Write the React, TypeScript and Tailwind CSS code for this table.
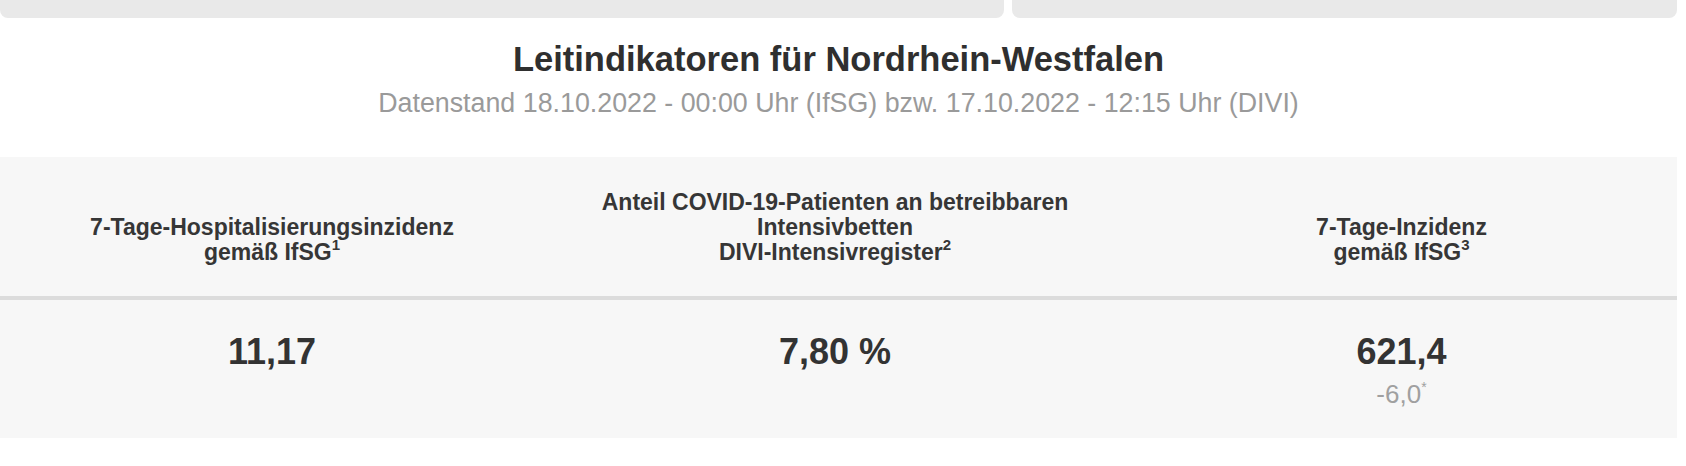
const headers = [
  { lines: ["7-Tage-Hospitalisierungsinzidenz", "gemäß IfSG"], note: "1" },
  { lines: ["Anteil COVID-19-Patienten an betreibbaren", "Intensivbetten", "DIVI-Intensivregister"], note: "2" },
  { lines: ["7-Tage-Inzidenz", "gemäß IfSG"], note: "3" },
];

const values = [
  { value: "11,17" },
  { value: "7,80 %" },
  { value: "621,4", change: "-6,0" },
];

export default function App() {
  return (
    <div className="w-full min-h-[466px] bg-white font-['Liberation_Sans',Arial,sans-serif] text-[#333]">
      <div className="w-[1677px]">
        {/* Cards above, cut off by the viewport */}
        <div className="flex gap-2 h-[18px]">
          <div className="w-[1004px] rounded-b-lg bg-[#e9e9e9]" />
          <div className="flex-1 rounded-b-lg bg-[#e9e9e9]" />
        </div>

        {/* Heading */}
        <div className="text-center mt-[21px] mb-[38px]">
          <h2 className="text-[34.5px] leading-[40px] font-bold text-[#2f2f2f]">
            Leitindikatoren für Nordrhein-Westfalen
          </h2>
          <p className="mt-[8px] text-[26.8px] leading-[32px] text-[#9a9a9a]">
            Datenstand 18.10.2022 - 00:00 Uhr (IfSG) bzw. 17.10.2022 - 12:15 Uhr (DIVI)
          </p>
        </div>

        {/* Indicator table */}
        <div className="bg-[#f7f7f7]">
          <div className="grid grid-cols-[544px_582px_551px] h-[139px] border-b-4 border-[#dcdcdc] box-content">
            {headers.map((h, i) => (
              <div key={i} className="flex flex-col justify-end items-center pb-[31px] text-center text-[23px] leading-[25px] font-bold text-[#363636]">
                {h.lines.map((line, j) => (
                  <div key={j}>
                    {line}
                    {j === h.lines.length - 1 && (
                      <sup className="text-[15px] -top-[10px]">{h.note}</sup>
                    )}
                  </div>
                ))}
              </div>
            ))}
          </div>
          <div className="grid grid-cols-[544px_582px_551px] h-[138px]">
            {values.map((v, i) => (
              <div key={i} className="flex flex-col items-center pt-8">
                <div className="text-[36px] leading-[40px] font-bold">{v.value}</div>
                {v.change && (
                  <div className="mt-[9px] text-[26px] leading-[27px] text-[#a0a0a0]">
                    {v.change}
                    <sup className="text-[14px] -top-[11px]">*</sup>
                  </div>
                )}
              </div>
            ))}
          </div>
        </div>
      </div>
    </div>
  );
}
